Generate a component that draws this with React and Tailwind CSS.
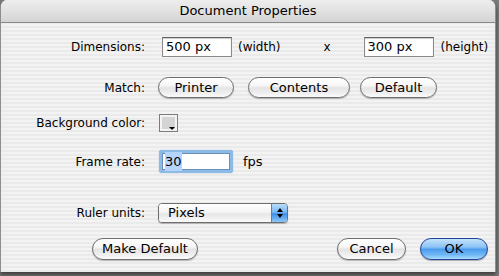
const font = { fontFamily: '"DejaVu Sans", "Liberation Sans", sans-serif' }

function AquaButton({ children, className = "" }) {
  return (
    <div
      className={
        "flex items-center justify-center rounded-full border border-[#6e6e6e] text-black shadow-[0_1px_1px_rgba(0,0,0,0.25)] bg-[linear-gradient(to_bottom,#ffffff_0%,#f6f6f6_40%,#e4e4e4_52%,#ededed_75%,#fbfbfb_100%)] " +
        className
      }
    >
      {children}
    </div>
  )
}

function OkButton() {
  return (
    <div className="flex h-full w-[68px] items-center justify-center rounded-full border border-[#24449a] text-black shadow-[0_1px_1px_rgba(0,0,0,0.3)] bg-[linear-gradient(to_bottom,#c4e2fb_0%,#8cc4f4_40%,#4d9ded_52%,#6fb6f6_78%,#a8dcfc_100%)]">
      OK
    </div>
  )
}

function TextField({ value, className = "" }) {
  return (
    <div
      className={
        "flex h-full items-center border border-[#8a8a8a] border-t-[#5f5f5f] bg-white pl-[3px] shadow-[inset_0_1px_1px_rgba(0,0,0,0.2)] text-[13px] " +
        className
      }
    >
      {value}
    </div>
  )
}

function Label({ children }) {
  return <div className="w-[144px] shrink-0 text-right">{children}</div>
}

export default function App() {
  return (
    <div className="h-[276px] w-[499px] overflow-hidden bg-[#7a7a7a]" style={font}>
      <div className="h-[272px] w-[496px] overflow-hidden rounded-t-[7px] border-x border-[#8d8d8d] bg-[repeating-linear-gradient(to_bottom,#f3f3f3_0px,#f3f3f3_2px,#eaeaea_2px,#eaeaea_4px)] text-[12px] text-black shadow-[0_3px_4px_rgba(0,0,0,0.5)]">
        <div className="flex h-[23px] items-center justify-center border-b border-[#8a8a8a] bg-[linear-gradient(to_bottom,#eeeeee,#d4d4d4)] text-[13px]">
          Document Properties
        </div>

        <div className="mt-[14px] flex h-[20px] items-center">
          <Label>Dimensions:</Label>
          <TextField value="500 px" className="ml-[17px] w-[70px]" />
          <span className="ml-[6px]">(width)</span>
          <span className="ml-[43px]">x</span>
          <TextField value="300 px" className="ml-[33px] w-[70px]" />
          <span className="ml-[7px]">(height)</span>
        </div>

        <div className="mt-[20px] flex h-[21px] items-center">
          <Label>Match:</Label>
          <div className="flex h-full items-center text-[13px]">
            <AquaButton className="ml-[13px] h-full w-[76px]">Printer</AquaButton>
            <AquaButton className="ml-[14px] h-full w-[102px]">Contents</AquaButton>
            <AquaButton className="ml-[10px] h-full w-[77px]">Default</AquaButton>
          </div>
        </div>

        <div className="mt-[16px] flex h-[18px] items-end">
          <Label>Background color:</Label>
          <div className="relative ml-[14px] h-[18px] w-[19px] border border-[#7c7c7c] bg-[#f4f4f4] p-[2px]">
            <div className="h-full w-full bg-[#d4d4d4]" />
            <div className="absolute bottom-[1px] right-[2px] h-0 w-0 border-x-[3px] border-t-[3px] border-x-transparent border-t-black" />
          </div>
        </div>

        <div className="mt-[18px] flex h-[23px] items-center">
          <Label>Frame rate:</Label>
          <div className="ml-[14px] h-full w-[74px] rounded-[3px] bg-[#8dbbe6] p-[3px] shadow-[0_0_1px_#5b8fd0]">
            <div className="flex h-full items-center border border-[#6a8fb8] bg-white pl-[2px] text-[13px]">
              <span className="bg-[#b5d5ff]">30</span>
            </div>
          </div>
          <span className="ml-[10px] text-[13px]">fps</span>
        </div>

        <div className="mt-[30px] flex h-[20px] items-center">
          <Label>Ruler units:</Label>
          <div className="ml-[13px] flex h-full w-[130px] overflow-hidden rounded-[4px] border border-[#6e6e6e] shadow-[0_1px_1px_rgba(0,0,0,0.25)]">
            <div className="flex flex-1 items-center bg-[linear-gradient(to_bottom,#ffffff_0%,#f4f4f4_45%,#e6e6e6_55%,#fafafa_100%)] pl-[9px] text-[13px]">
              Pixels
            </div>
            <div className="flex w-[16px] flex-col items-center justify-center gap-[2px] border-l border-[#5a7ec0] bg-[linear-gradient(to_bottom,#b9dcfa_0%,#7ab8f2_45%,#3f8ee6_55%,#8cc8f8_100%)]">
              <div className="h-0 w-0 border-x-[3px] border-b-[4px] border-x-transparent border-b-black" />
              <div className="h-0 w-0 border-x-[3px] border-t-[4px] border-x-transparent border-t-black" />
            </div>
          </div>
        </div>

        <div className="mt-[15px] flex h-[22px] items-center pl-[91px] pr-[7px] text-[13px]">
          <AquaButton className="h-full w-[106px]">Make Default</AquaButton>
          <div className="flex-1" />
          <AquaButton className="h-full w-[69px]">Cancel</AquaButton>
          <div className="ml-[14px] h-full">
            <OkButton />
          </div>
        </div>
      </div>
    </div>
  )
}
